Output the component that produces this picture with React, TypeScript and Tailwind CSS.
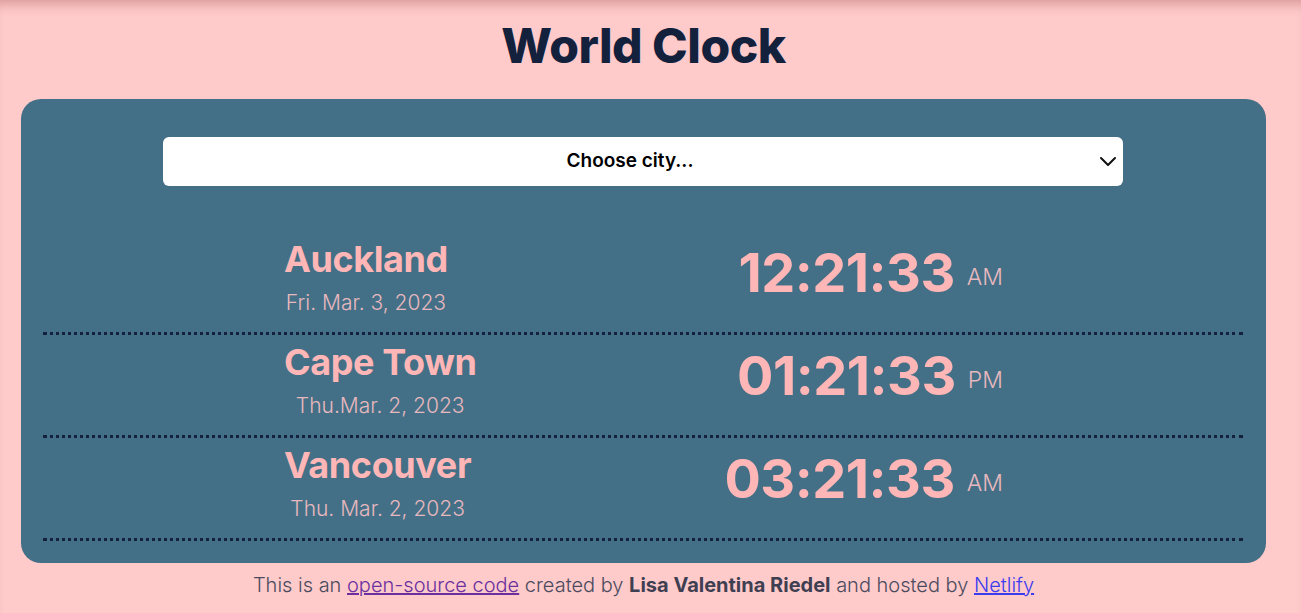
import React from "react";

const cities = [
  { name: "Auckland", date: "Fri. Mar. 3, 2023", time: "12:21:33", ampm: "AM" },
  { name: "Cape Town", date: "Thu.Mar. 2, 2023", time: "01:21:33", ampm: "PM" },
  { name: "Vancouver", date: "Thu. Mar. 2, 2023", time: "03:21:33", ampm: "AM" },
];

export default function App() {
  return (
    <div
      className="min-h-screen bg-[#fecaca] shadow-[inset_0_12px_12px_-8px_rgba(150,60,60,0.35)]"
      style={{ fontFamily: "Inter, 'Open Sans', sans-serif" }}
    >
      <div className="ml-[21px] mr-[35px] flex flex-col">
        <h1 className="text-center text-[48px] leading-[60px] font-extrabold text-[#14213d] tracking-[-0.5px] pt-[16px] pb-[23px]">
          World Clock
        </h1>
        <div className="rounded-[20px] bg-[#437086] pl-[22px] pr-[23px] pt-[38px] pb-[22px]">
          <div className="relative mx-auto w-[960px] h-[49px] rounded-[6px] bg-white flex items-center justify-center pr-[26px] text-[19px] font-semibold text-black">
            Choose city...
            <svg
              className="absolute right-[6px] top-[16px]"
              width="18"
              height="18"
              viewBox="0 0 18 18"
              fill="none"
              stroke="#111"
              strokeWidth="2"
              strokeLinecap="round"
              strokeLinejoin="round"
            >
              <path d="M2 5l7 7 7-7" />
            </svg>
          </div>
          <div className="mt-[46px]">
            {cities.map((c) => (
              <div
                key={c.name}
                className="h-[103px] border-b-[3px] border-dotted border-[#14213d] flex items-center justify-between pl-[241px] pr-[240px]"
              >
                <div className="text-center -mt-[10px]">
                  <div className="text-[36px] leading-[44px] font-bold text-[#ffb6b6] tracking-[-0.4px]">{c.name}</div>
                  <div className="mt-[8px] text-[21px] leading-[28px] font-light text-[#e8b8bf]">{c.date}</div>
                </div>
                <div className="flex items-end -mt-[18px]">
                  <span className="text-[54px] leading-[60px] font-bold text-[#ffb6b6] tracking-[-0.5px]">{c.time}</span>
                  <span className="ml-[12px] mb-[12px] text-[23px] leading-[28px] font-light text-[#e8b8bf]">{c.ampm}</span>
                </div>
              </div>
            ))}
          </div>
        </div>
        <p className="text-center text-[20px] leading-[30px] font-light text-[#4b4b5e] mt-[7px]">
          This is an{" "}
          <a href="#" className="underline text-[#6b2fa0]">
            open-source code
          </a>{" "}
          created by <strong className="font-bold text-[#3f3f52]">Lisa Valentina Riedel</strong> and hosted by{" "}
          <a href="#" className="underline text-[#3b3bf0]">
            Netlify
          </a>
        </p>
      </div>
    </div>
  );
}
